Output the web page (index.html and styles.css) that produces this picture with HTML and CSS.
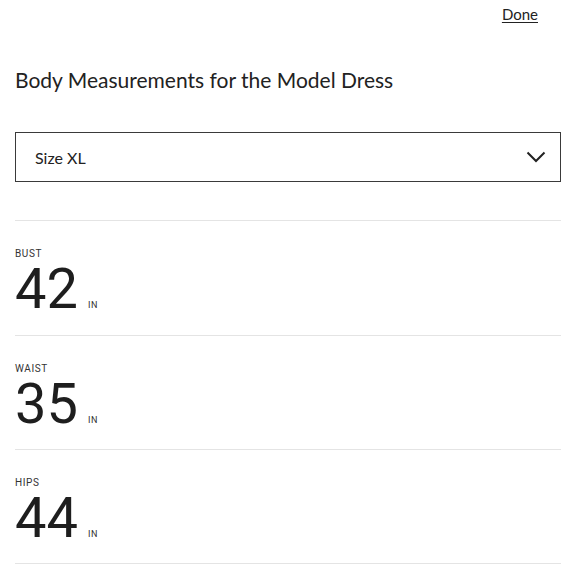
FILE: index.html
```html
<!DOCTYPE html>
<html lang="en">
<head>
<meta charset="utf-8">
<title>Body Measurements</title>
<link rel="stylesheet" href="styles.css">
</head>
<body>
<div class="page">
  <header class="topbar">
    <a class="done" href="#">Done</a>
  </header>
  <h1 class="title">Body Measurements for the Model Dress</h1>
  <div class="select">
    <span class="select-label">Size XL</span>
    <svg class="chevron" width="20" height="12" viewBox="0 0 20 12" aria-hidden="true">
      <path d="M1.5 1.5 L10 10 L18.5 1.5" fill="none" stroke="#222" stroke-width="2"/>
    </svg>
  </div>
  <ul class="measures">
    <li class="measure">
      <div class="m-label">BUST</div>
      <div class="m-value"><span class="num">42</span><span class="unit">IN</span></div>
    </li>
    <li class="measure">
      <div class="m-label">WAIST</div>
      <div class="m-value"><span class="num">35</span><span class="unit">IN</span></div>
    </li>
    <li class="measure">
      <div class="m-label">HIPS</div>
      <div class="m-value"><span class="num">44</span><span class="unit">IN</span></div>
    </li>
  </ul>
</div>
</body>
</html>
```
FILE: styles.css
```css
* { box-sizing: border-box; }
html, body { margin: 0; padding: 0; background: #fff; }
body {
  font-family: "Lato", "Liberation Sans", sans-serif;
  color: #222;
}
.page {
  padding: 0 19px 0 15px;
}
.topbar {
  display: flex;
  justify-content: flex-end;
  padding: 5px 23px 0 0;
  height: 24px;
}
.done {
  font-size: 15px;
  line-height: 18px;
  color: #222;
  text-decoration: underline;
  text-underline-offset: 2px;
}
.title {
  margin: 43px 0 0;
  font-size: 21px;
  line-height: 25px;
  font-weight: 400;
  color: #222;
}
.select {
  margin-top: 40px;
  height: 50px;
  border: 1.5px solid #3a3a3a;
  display: flex;
  align-items: center;
  justify-content: space-between;
  padding: 0 14px 0 19px;
}
.select-label {
  font-size: 16px;
}
.chevron { display: block; }
.measures {
  list-style: none;
  margin: 38px 0 0;
  padding: 0;
}
.measure {
  border-top: 1px solid #e4e4e4;
  height: 114.7px;
  padding-top: 27px;
}
.measure:last-child {
  border-bottom: 1px solid #e4e4e4;
}
.m-label {
  font-family: "Roboto", "Liberation Sans", sans-serif;
  font-size: 10px;
  line-height: 12px;
  letter-spacing: 0.6px;
  color: #333;
}
.m-value {
  display: flex;
  align-items: baseline;
  margin-top: 7px;
}
.num {
  font-family: "Roboto", "Liberation Sans", sans-serif;
  font-size: 56px;
  line-height: 44px;
  color: #1e1e1e;
}
.unit {
  font-family: "Roboto", "Liberation Sans", sans-serif;
  font-size: 9px;
  line-height: 10px;
  letter-spacing: 0.5px;
  margin-left: 10px;
  color: #333;
}
```
